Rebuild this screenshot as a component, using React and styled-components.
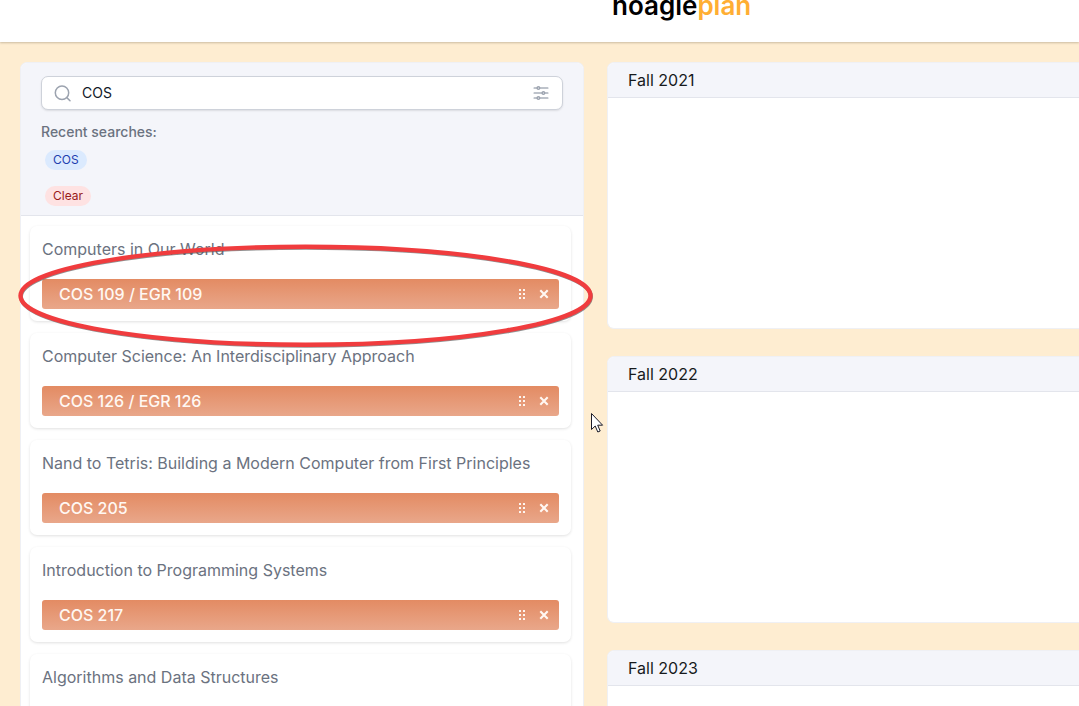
import React from "react";
import styled, { createGlobalStyle } from "styled-components";

const GlobalStyle = createGlobalStyle`
  *, *::before, *::after { box-sizing: border-box; }
  body { margin: 0; font-family: Inter, "Liberation Sans", sans-serif; font-size: 16px; color: #171a1c; }
  button, input { font: inherit; }
`;

const Page = styled.div`
  position: relative;
  height: 100vh;
  overflow: hidden;
  display: flex;
  flex-direction: column;
  background: #feedd1;
`;

const Header = styled.header`
  flex: none;
  height: 42px;
  padding-left: 612px;
  display: flex;
  align-items: flex-end;
  background: #fff;
  box-shadow: 0 1px 2px rgba(50, 40, 20, 0.25);
`;

const Logo = styled.a`
  padding-bottom: 20px;
  font-size: 26px;
  line-height: 32px;
  font-weight: 600;
  color: #000;
  text-decoration: none;
`;

const LogoAccent = styled.span`
  color: #ffae33;
`;

const Main = styled.main`
  flex: 1;
  min-height: 0;
  padding: 20px 0 0 20px;
  display: grid;
  grid-template-columns: 49fr 41fr;
  column-gap: 23px;
`;

const SearchPanel = styled.section`
  min-width: 0;
  background: #fff;
  border: 1px solid #eff0f4;
  border-bottom: 0;
  border-radius: 7px 7px 0 0;
  overflow: hidden;
`;

const SearchHead = styled.div`
  padding: 13px 20px 1px;
  background: #f4f5fa;
  border-bottom: 1px solid #e3e5ec;
`;

const SearchBox = styled.label`
  height: 34px;
  padding: 0 13px 0 12px;
  display: flex;
  align-items: center;
  gap: 11px;
  background: #fff;
  border: 1px solid #ced2da;
  border-radius: 7px;
  box-shadow: 0 1px 2px rgba(0, 0, 0, 0.1);
`;

const SearchInput = styled.input`
  flex: 1;
  min-width: 0;
  padding: 0;
  border: 0;
  outline: 0;
  background: none;
  font-size: 14px;
  line-height: 20px;
  color: #111827;
`;

const IconButton = styled.button`
  padding: 0;
  border: 0;
  background: none;
  color: inherit;
  display: flex;
`;

const RecentLabel = styled.h2`
  margin: 12px 0 0;
  font-size: 14px;
  line-height: 20px;
  font-weight: 500;
  color: #6b7280;
`;

const ChipRow = styled.div`
  display: flex;
  padding: 8px 4px;
`;

const Chip = styled.button`
  height: 20px;
  padding: 0 8px;
  border: 0;
  border-radius: 10px;
  font-size: 12px;
  line-height: 20px;
  color: ${(p) => (p.$danger ? "#991b1b" : "#1e40af")};
  background: ${(p) => (p.$danger ? "#fee2e2" : "#dbeafe")};
`;

const Results = styled.ul`
  list-style: none;
  margin: 0;
  padding: 10px 12px 0 9px;
  display: grid;
  gap: 12px;
`;

const Card = styled.li`
  height: 95px;
  padding: 11px 12px 0;
  border-radius: 7px;
  background: #fff;
  box-shadow: 0 1px 3px rgba(0, 0, 0, 0.12);
`;

const CourseTitle = styled.h3`
  margin: 0 0 18px;
  font-size: 16px;
  line-height: 24px;
  font-weight: 400;
  color: #6b7280;
  white-space: nowrap;
`;

const CourseBar = styled.div`
  height: 30px;
  padding: 0 9px 0 17px;
  display: flex;
  align-items: center;
  border-radius: 3px;
  background: linear-gradient(#e38b63, #e9a78a);
  color: #fff8f3;
  font-weight: 500;
`;

const CourseCode = styled.span`
  flex: 1;
`;

const BarActions = styled.span`
  display: flex;
  gap: 10px;
`;

const Terms = styled.div`
  min-width: 0;
  display: flex;
  flex-direction: column;
  gap: 27px;
`;

const Term = styled.section`
  flex: none;
  height: 267px;
  background: #fff;
  border: solid #eff0f4;
  border-width: 1px 0 1px 1px;
  border-radius: 7px 0 0 7px;
  overflow: hidden;
`;

const TermTitle = styled.h2`
  margin: 0;
  padding: 5px 20px;
  font-size: 16px;
  line-height: 24px;
  font-weight: 400;
  background: #f4f5fa;
  border-bottom: 1px solid #e3e5ec;
`;

const Highlight = styled.svg`
  position: absolute;
  left: 16px;
  top: 242px;
  pointer-events: none;
`;

const Pointer = styled.svg`
  position: absolute;
  left: 590px;
  top: 412px;
  pointer-events: none;
`;

const SearchIcon = () => (
  <svg width="17" height="17" viewBox="0 0 17 17" fill="none" stroke="#9ca3af" strokeWidth="1.5" strokeLinecap="round" aria-hidden="true">
    <circle cx="8" cy="7.8" r="6.7" />
    <path d="M12.8 12.6 L16 15.8" />
  </svg>
);

const SlidersIcon = () => (
  <svg width="16" height="16" viewBox="0 0 16 16" fill="none" stroke="#a9b0ba" strokeWidth="1.7" strokeLinecap="round" aria-hidden="true">
    <path d="M1.3 3H4M7 3H14.7M1.3 8H9M12 8H14.7M1.3 13H4M7 13H14.7" />
    <g strokeWidth="1.4" stroke="#9ca3af">
      <circle cx="5.4" cy="3" r="1.3" />
      <circle cx="10.4" cy="8" r="1.3" />
      <circle cx="5.4" cy="13" r="1.3" />
    </g>
  </svg>
);

const GripIcon = () => (
  <svg width="12" height="12" viewBox="0 0 12 12" fill="currentColor" aria-hidden="true">
    {[1, 5, 9].map((y) => (
      <React.Fragment key={y}>
        <rect x="3" y={y} width="2" height="2" rx="0.3" />
        <rect x="7" y={y} width="2" height="2" rx="0.3" />
      </React.Fragment>
    ))}
  </svg>
);

const CloseIcon = () => (
  <svg width="12" height="12" viewBox="0 0 12 12" fill="none" stroke="currentColor" strokeWidth="2.1" aria-hidden="true">
    <path d="M2.3 2.3L9.7 9.7M9.7 2.3L2.3 9.7" />
  </svg>
);

const courses = [
  ["Computers in Our World", "COS 109 / EGR 109"],
  ["Computer Science: An Interdisciplinary Approach", "COS 126 / EGR 126"],
  ["Nand to Tetris: Building a Modern Computer from First Principles", "COS 205"],
  ["Introduction to Programming Systems", "COS 217"],
  ["Algorithms and Data Structures", "COS 226"],
];

const terms = ["Fall 2021", "Fall 2022", "Fall 2023"];

export default function App() {
  return (
    <Page>
      <GlobalStyle />
      <Header>
        <Logo href="#">hoagie<LogoAccent>plan</LogoAccent></Logo>
      </Header>
      <Main>
        <SearchPanel>
          <SearchHead>
            <SearchBox>
              <SearchIcon />
              <SearchInput type="text" defaultValue="COS" aria-label="Search courses" />
              <IconButton type="button" aria-label="Filters"><SlidersIcon /></IconButton>
            </SearchBox>
            <RecentLabel>Recent searches:</RecentLabel>
            <ChipRow><Chip type="button">COS</Chip></ChipRow>
            <ChipRow><Chip type="button" $danger>Clear</Chip></ChipRow>
          </SearchHead>
          <Results>
            {courses.map(([title, code]) => (
              <Card key={code}>
                <CourseTitle>{title}</CourseTitle>
                <CourseBar>
                  <CourseCode>{code}</CourseCode>
                  <BarActions>
                    <IconButton type="button" aria-label={`Move ${code}`}><GripIcon /></IconButton>
                    <IconButton type="button" aria-label={`Remove ${code}`}><CloseIcon /></IconButton>
                  </BarActions>
                </CourseBar>
              </Card>
            ))}
          </Results>
        </SearchPanel>
        <Terms>
          {terms.map((name) => (
            <Term key={name}><TermTitle>{name}</TermTitle></Term>
          ))}
        </Terms>
      </Main>
      <Highlight width="580" height="110" viewBox="0 0 580 110" fill="none" aria-hidden="true">
        <ellipse cx="290" cy="54.7" rx="285" ry="49" stroke="#555" strokeOpacity="0.65" strokeWidth="4" />
        <ellipse cx="289.5" cy="53.7" rx="285" ry="49" stroke="#f03c3e" strokeWidth="4.4" />
      </Highlight>
      <Pointer width="14" height="22" viewBox="0 0 14 22" aria-hidden="true">
        <path d="M1.5 1.5V17.5L5.2 14L7.8 20L10.2 19L7.7 13.2H12.6Z" fill="#fff" stroke="#1c1c28" strokeWidth="1" />
      </Pointer>
    </Page>
  );
}
